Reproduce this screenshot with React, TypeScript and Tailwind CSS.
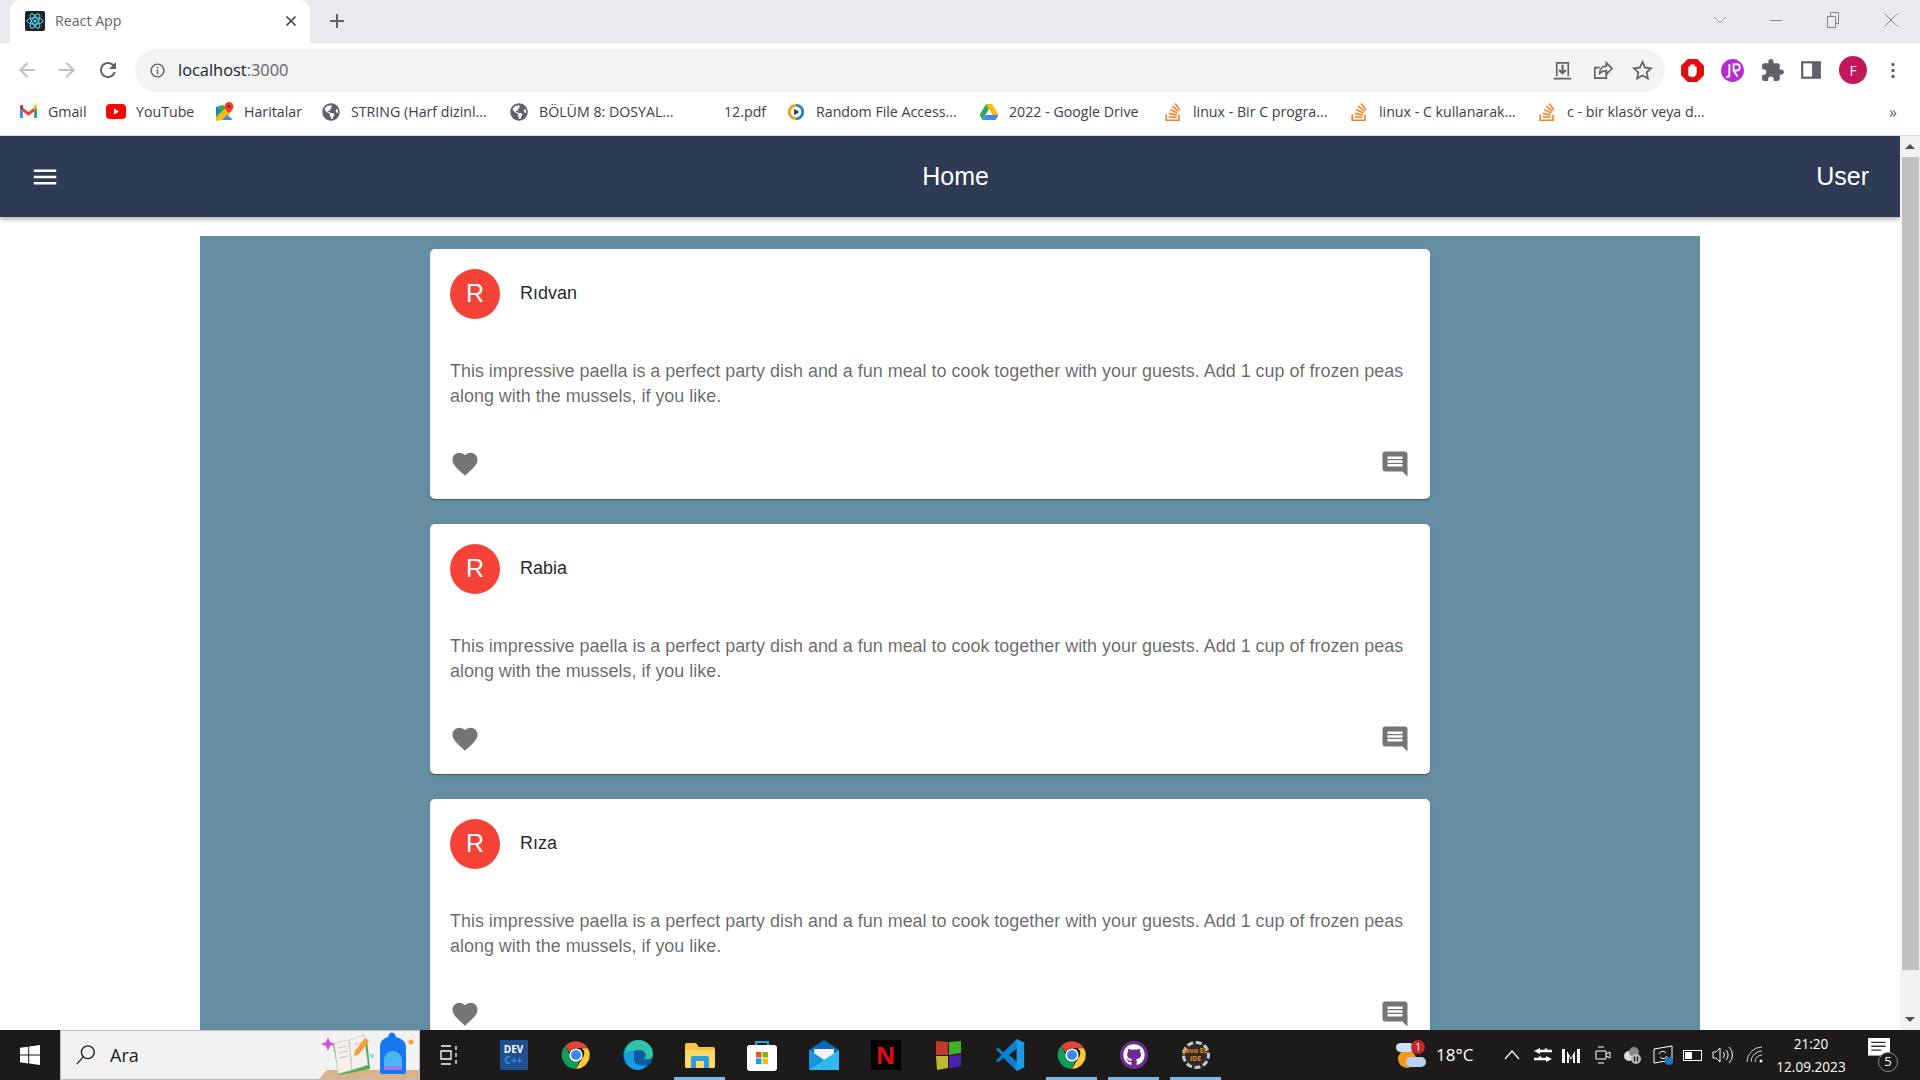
import React from 'react';
import { FaGithub, FaGlobeAmericas } from 'react-icons/fa';
import { SiStackoverflow } from 'react-icons/si';

const MuiIcon: React.FC<{ d: string; className?: string }> = ({ d, className }) => (
  <svg viewBox="0 0 24 24" className={className} fill="currentColor">
    <path d={d} />
  </svg>
);

const HEART = 'M12 21.35l-1.45-1.32C5.4 15.36 2 12.28 2 8.5 2 5.42 4.42 3 7.5 3c1.74 0 3.41.81 4.5 2.09C13.09 3.81 14.76 3 16.5 3 19.58 3 22 5.42 22 8.5c0 3.78-3.4 6.86-8.55 11.54L12 21.35z';
const COMMENT = 'M21.99 4c0-1.1-.89-2-1.99-2H4c-1.1 0-2 .9-2 2v12c0 1.1.9 2 2 2h14l4 4-.01-18zM18 14H6v-2h12v2zm0-3H6V9h12v2zm0-3H6V6h12v2z';
const MENU = 'M3 18h18v-2H3v2zm0-5h18v-2H3v2zm0-7v2h18V6H3z';
const BACK = 'M20 11H7.83l5.59-5.59L12 4l-8 8 8 8 1.41-1.41L7.83 13H20v-2z';
const FORWARD = 'M4 11h12.17l-5.59-5.59L12 4l8 8-8 8-1.41-1.41L16.17 13H4v-2z';
const RELOAD = 'M17.65 6.35C16.2 4.9 14.21 4 12 4c-4.42 0-7.99 3.58-7.99 8s3.57 8 7.99 8c3.73 0 6.84-2.55 7.73-6h-2.08c-.82 2.33-3.04 4-5.65 4-3.31 0-6-2.69-6-6s2.69-6 6-6c1.66 0 3.14.69 4.22 1.78L13 11h7V4l-2.35 2.35z';
const PUZZLE = 'M20.5 11H19V7c0-1.1-.9-2-2-2h-4V3.5C13 2.12 11.88 1 10.5 1S8 2.12 8 3.5V5H4c-1.1 0-1.99.9-1.99 2v3.8H3.5c1.49 0 2.7 1.21 2.7 2.7s-1.21 2.7-2.7 2.7H2V20c0 1.1.9 2 2 2h3.8v-1.5c0-1.49 1.21-2.7 2.7-2.7 1.49 0 2.7 1.21 2.7 2.7V22H17c1.1 0 2-.9 2-2v-4h1.5c1.38 0 2.5-1.12 2.5-2.5S21.88 11 20.5 11z';

const ChromeLogo: React.FC<{ className?: string }> = ({ className }) => (
  <svg viewBox="0 0 48 48" className={className}>
    <path d="M24 2a22 22 0 0 1 19.05 11H24a11 11 0 0 0-10.2 6.9L6.6 9.6A22 22 0 0 1 24 2z" fill="#db4437" />
    <path d="M43.05 13A22 22 0 0 1 24 46l9.6-16.5A11 11 0 0 0 33.5 13z" fill="#fcc934" />
    <path d="M24 46A22 22 0 0 1 6.6 9.6l9.9 17.1A11 11 0 0 0 29 33.7L24 46z" fill="#0f9d58" />
    <circle cx="24" cy="24" r="10.5" fill="#fff" />
    <circle cx="24" cy="24" r="8" fill="#4285f4" />
  </svg>
);

const Favicon = () => (
  <svg viewBox="0 0 20 20" className="h-5 w-5">
    <rect width="20" height="20" rx="2" fill="#20232a" />
    <g fill="none" stroke="#61dafb" strokeWidth="1">
      <ellipse cx="10" cy="10" rx="8" ry="3.2" />
      <ellipse cx="10" cy="10" rx="8" ry="3.2" transform="rotate(60 10 10)" />
      <ellipse cx="10" cy="10" rx="8" ry="3.2" transform="rotate(120 10 10)" />
    </g>
    <circle cx="10" cy="10" r="1.6" fill="#61dafb" />
  </svg>
);

const Gmail = () => (
  <svg viewBox="0 0 20 16" className="h-[15px] w-[19px]">
    <path d="M1 15V3l3 2v10H2a1 1 0 0 1-1-1z" fill="#4285f4" />
    <path d="M16 15V5l3-2v11a1 1 0 0 1-1 1z" fill="#34a853" />
    <path d="M4 8V4l6 4.5L16 4v4l-6 4.5z" fill="#ea4335" />
    <path d="M1 4.5V3c0-1.6 1.8-2.5 3-1.6V6z" fill="#c5221f" />
    <path d="M16 6V1.4c1.2-.9 3 0 3 1.6v1.5z" fill="#fbbc04" />
  </svg>
);

const YouTube = () => (
  <svg viewBox="0 0 20 15" className="h-[15px] w-5">
    <rect width="20" height="15" rx="4" fill="#f00" />
    <path d="M8 4.5v6l5-3z" fill="#fff" />
  </svg>
);

const Maps = () => (
  <svg viewBox="0 0 20 20" className="h-5 w-5">
    <path d="M2 5l7-2 3 3-10 10z" fill="#34a853" />
    <path d="M2 16L12 6l4 7-8 5-6 1z" fill="#fbbc04" />
    <path d="M8 18l5-5 5 4v1z" fill="#4285f4" />
    <path d="M2 5l4 4-4 4z" fill="#1a73e8" />
    <path d="M15 0a4.5 4.5 0 0 1 4.5 4.5c0 3-4.5 7-4.5 7s-4.5-4-4.5-7A4.5 4.5 0 0 1 15 0z" fill="#ea4335" />
    <circle cx="15" cy="4.5" r="1.6" fill="#a50e0e" />
  </svg>
);

const Random = () => (
  <svg viewBox="0 0 20 20" className="h-[18px] w-[18px]">
    <circle cx="10" cy="10" r="9" fill="#f39c12" />
    <path d="M10 1a9 9 0 0 1 0 18z" fill="#1e88c7" />
    <circle cx="10" cy="10" r="6" fill="#fff" />
    <path d="M8 6.5v7l5.5-3.5z" fill="#333" />
  </svg>
);

const Drive = () => (
  <svg viewBox="0 0 20 18" className="h-[18px] w-5">
    <path d="M7 1h6l6.5 11h-6z" fill="#fbbc04" />
    <path d="M7 1l3 5-6.5 11L.5 12z" fill="#34a853" />
    <path d="M6.5 12h13l-3 5h-13z" fill="#4285f4" />
  </svg>
);

const SO = () => <SiStackoverflow className="h-[18px] w-[18px] text-[#f48024]" />;
const Globe = () => <FaGlobeAmericas className="h-[18px] w-[18px] text-[#5f6368]" />;

const bookmarks = [
  { label: 'Gmail', icon: <Gmail />, cls: 'w-[88px]' },
  { label: 'YouTube', icon: <YouTube />, cls: 'w-[108px]' },
  { label: 'Haritalar', icon: <Maps />, cls: 'w-[107px]' },
  { label: 'STRING (Harf dizinl...', icon: <Globe />, cls: 'w-[188px]' },
  { label: 'BÖLÜM 8: DOSYAL...', icon: <Globe />, cls: 'w-[185px]' },
  { label: '12.pdf', icon: <span className="h-4 w-4" />, cls: 'w-[92px]' },
  { label: 'Random File Access...', icon: <Random />, cls: 'w-[193px]' },
  { label: '2022 - Google Drive', icon: <Drive />, cls: 'w-[184px]' },
  { label: 'linux - Bir C progra...', icon: <SO />, cls: 'w-[186px]' },
  { label: 'linux - C kullanarak...', icon: <SO />, cls: 'w-[188px]' },
  { label: 'c - bir klasör veya d...', icon: <SO />, cls: 'w-[200px]' },
];

const BrowserChrome = () => (
  <div className="font-['Open_Sans',sans-serif] text-[#3c4043]">
    {/* tab strip */}
    <div className="flex h-[43px] items-end bg-[#e8eaed] pl-[10px]">
      <div className="flex h-[43px] w-[300px] items-center rounded-t-[10px] bg-white pb-[2px] pl-[15px] pr-[13px]">
        <Favicon />
        <span className="ml-[10px] flex-1 text-[14.2px] text-[#5f6368]">React App</span>
        <svg viewBox="0 0 12 12" className="h-3 w-3" stroke="#3c4043" strokeWidth="1.6">
          <path d="M1.5 1.5l9 9M10.5 1.5l-9 9" />
        </svg>
      </div>
      <svg viewBox="0 0 16 16" className="mb-[14px] ml-[19px] h-4 w-4" stroke="#5f6368" strokeWidth="2">
        <path d="M8 1v14M1 8h14" />
      </svg>
      <div className="mb-[15px] ml-auto flex items-center text-[#9aa0a6]">
        <svg viewBox="0 0 14 8" className="mr-[43px] h-2 w-[14px]" fill="none" stroke="#9aa0a6">
          <path d="M1 1l6 6 6-6" />
        </svg>
        <span className="mr-[44px] h-px w-[12px] bg-[#80868b]" />
        <svg viewBox="0 0 14 16" className="mr-[44px] h-4 w-[14px]" fill="none" stroke="#80868b">
          <path d="M1.5 4.5h8v11h-8zM4.5 4.5v-4h8v11h-3" />
        </svg>
        <svg viewBox="0 0 14 14" className="mr-[22px] h-[14px] w-[14px]" fill="none" stroke="#80868b">
          <path d="M.5.5l13 13M13.5.5l-13 13" />
        </svg>
      </div>
    </div>

    {/* address bar */}
    <div className="flex h-[49px] items-center bg-white pl-[15px] pt-[5px]">
      <MuiIcon d={BACK} className="h-6 w-6 text-[#bdc1c6]" />
      <MuiIcon d={FORWARD} className="ml-4 h-6 w-6 text-[#bdc1c6]" />
      <MuiIcon d={RELOAD} className="ml-[17px] h-6 w-6 text-[#5f6368]" />
      <div className="ml-[15px] flex h-[43px] w-[1530px] items-center rounded-full bg-[#f1f3f4] pl-[15px] pr-[11px]">
        <svg viewBox="0 0 16 16" className="h-[15px] w-[15px]" fill="none" stroke="#5f6368" strokeWidth="1.5">
          <circle cx="8" cy="8" r="6.8" />
          <path d="M8 7v5M8 4v1.6" />
        </svg>
        <span className="ml-[13px] flex-1 text-[16.4px] text-[#202124]">
          localhost<span className="text-[#5f6368]">:3000</span>
        </span>
        <div className="flex items-center gap-[17px] text-[#5f6368]">
          <svg viewBox="0 0 24 24" className="h-[23px] w-[23px]" fill="none" stroke="#5f6368" strokeWidth="1.7">
            <path d="M6 18V4h12v14M3 20.5h18" />
            <path d="M12 6v9M8.5 11.5L12 15l3.5-3.5" strokeWidth="2.2" />
          </svg>
          <svg viewBox="0 0 24 24" className="h-[23px] w-[23px]" fill="none" stroke="#5f6368" strokeWidth="1.7">
            <path d="M16 12v8H4V9h5" />
            <path d="M9 15c0-5 3-7.5 7-7.5V4l6 6-6 6v-4c-3 0-5 1-7 3z" />
          </svg>
          <svg viewBox="0 0 24 24" className="h-[23px] w-[23px]" fill="none" stroke="#5f6368" strokeWidth="1.8">
            <path d="M12 3l2.7 6 6.3.7-4.7 4.3 1.3 6.4L12 17.2l-5.6 3.2 1.3-6.4L3 9.7 9.3 9z" />
          </svg>
        </div>
      </div>
      <div className="ml-[15px] flex items-center">
        <svg viewBox="0 0 24 24" className="h-[25px] w-[25px]">
          <path d="M7.5 1h9L23 7.5v9L16.5 23h-9L1 16.5v-9z" fill="#e30b0b" />
          <path d="M8 17V9a1 1 0 0 1 2 0V7a1 1 0 0 1 2 0v0a1 1 0 0 1 2 0v2a1 1 0 0 1 2 0v6l-2 3h-4z" fill="#fff" />
        </svg>
        <svg viewBox="0 0 24 24" className="ml-[15px] h-[25px] w-[25px]">
          <circle cx="12" cy="12" r="11" fill="#b52ad6" />
          <path d="M9 6v12M9 18h-3M13 6h3a3 3 0 0 1 0 6h-3zm0 6l4 6" fill="none" stroke="#fff" strokeWidth="1.8" />
        </svg>
        <MuiIcon d={PUZZLE} className="ml-[15px] h-[25px] w-[25px] text-[#5f6368]" />
        <svg viewBox="0 0 20 20" className="ml-[15px] h-[22px] w-[22px]">
          <path d="M1 2h18v16H1z" fill="#5f6368" />
          <path d="M3 4h8v12H3z" fill="#fff" />
        </svg>
        <div className="ml-[17px] flex h-7 w-7 items-center justify-center rounded-full bg-[#c2185b] text-[14px] text-white">
          F
        </div>
        <svg viewBox="0 0 4 20" className="ml-[24px] h-[17px] w-1" fill="#5f6368">
          <circle cx="2" cy="3" r="2" />
          <circle cx="2" cy="10" r="2" />
          <circle cx="2" cy="17" r="2" />
        </svg>
      </div>
    </div>

    {/* bookmarks */}
    <div className="flex h-[44px] items-center border-b border-[#dadce0] bg-white pb-[3px] pl-[18px] text-[14.2px] text-[#3c4043]">
      {bookmarks.map((b, i) => (
        <div key={i} className={`flex items-center gap-[10px] ${b.cls}`}>
          <span className="flex w-5 justify-center">{b.icon}</span>
          <span className="whitespace-nowrap">{b.label}</span>
        </div>
      ))}
      <span className="ml-auto mr-[23px] text-[16px] text-[#5f6368]">»</span>
    </div>
  </div>
);

const posts = ['Rıdvan', 'Rabia', 'Rıza'];

const PostCard: React.FC<{ name: string }> = ({ name }) => (
  <div className="w-[1000px] shrink-0 rounded-[5px] bg-white shadow-[0_2px_1px_-1px_rgba(0,0,0,0.2),0_1px_1px_0_rgba(0,0,0,0.14),0_1px_3px_0_rgba(0,0,0,0.12)]">
    <div className="flex items-center p-5">
      <div className="mr-5 flex h-[50px] w-[50px] items-center justify-center rounded-full bg-[#f44336] text-[25px] text-white">
        R
      </div>
      <span className="mb-[1px] text-[18px] leading-[25px] text-[rgba(0,0,0,0.87)]">{name}</span>
    </div>
    <p className="p-5 text-[17.95px] leading-[25px] text-[rgba(0,0,0,0.6)]">
      This impressive paella is a perfect party dish and a fun meal to cook together with your guests. Add 1 cup of
      frozen peas along with the mussels, if you like.
    </p>
    <div className="flex items-center justify-between p-[10px]">
      <div className="p-[10px]">
        <MuiIcon d={HEART} className="h-[30px] w-[30px] text-[#757575]" />
      </div>
      <div className="p-[10px]">
        <MuiIcon d={COMMENT} className="h-[30px] w-[30px] text-[#757575]" />
      </div>
    </div>
  </div>
);

const Scrollbar = () => (
  <div className="flex w-5 shrink-0 flex-col items-center bg-[#f1f1f1]">
    <div className="flex h-[21px] items-center justify-center">
      <span className="h-0 w-0 border-x-[5px] border-b-[5px] border-x-transparent border-b-[#505050]" />
    </div>
    <div className="h-[813px] w-[17px] bg-[#c1c1c1]" />
    <div className="mt-auto flex h-[21px] items-center justify-center">
      <span className="h-0 w-0 border-x-[5px] border-t-[5px] border-x-transparent border-t-[#505050]" />
    </div>
  </div>
);

const Underline = () => <span className="absolute bottom-0 left-[-6px] right-[-6px] h-[3px] bg-[#76b9ed]" />;

const TaskIcon: React.FC<{ active?: boolean; children: React.ReactNode }> = ({ active, children }) => (
  <div className="relative flex h-[50px] w-[39px] items-center justify-center">
    {children}
    {active && <Underline />}
  </div>
);

const Taskbar = () => (
  <div className="flex h-[50px] shrink-0 items-center bg-[#1c1b1a] font-['Open_Sans',sans-serif] text-white">
    <div className="flex h-[50px] w-[60px] items-center justify-center">
      <svg viewBox="0 0 20 20" className="h-5 w-5" fill="#fff">
        <path d="M0 2.8l8.2-1.1v7.9H0zM9.2 1.5L20 0v9.6H9.2zM0 10.5h8.2v7.9L0 17.2zM9.2 10.5H20V20L9.2 18.5z" />
      </svg>
    </div>
    <div className="relative flex h-[50px] w-[360px] items-center overflow-hidden border border-[#bdbdbd] bg-[#f2f2f2] pl-[14px] text-[#1c1b1a]">
      <svg viewBox="0 0 24 24" className="h-[22px] w-[22px]" fill="none" stroke="#222" strokeWidth="1.5">
        <circle cx="14" cy="9" r="7" />
        <path d="M9 14l-7 8" />
      </svg>
      <span className="ml-[13px] text-[18px]">Ara</span>
      <svg viewBox="0 0 100 50" className="absolute bottom-0 right-0 h-[50px] w-[100px]">
        <path d="M0 50l8-9h92v9z" fill="#d9b48a" />
        <path d="M14 16l34-6 3 30-31 6z" fill="#4caf50" />
        <path d="M15 14l15-3 3 30-14 4zM30 11l15-5 4 30-16 5z" fill="#f5f0ea" stroke="#b5b0c0" strokeWidth="0.5" />
        <path d="M19 19l9-2M20 24l9-2M20 29l9-2M35 16l8-3M36 21l8-3" stroke="#b9b4c4" strokeWidth="0.8" />
        <path d="M36 22l10-13 4 3-10 13-5 2z" fill="#f59e3b" />
        <path d="M9 8l2 5 5 2-5 2-2 5-2-5-5-2 5-2z" fill="#d14fe0" />
        <circle cx="53" cy="27" r="2" fill="#7fd6e8" />
        <path d="M61 43V18c0-7 5-9 8-10 1-6 7-6 8 0 3 1 10 3 10 10v25a2 2 0 0 1-2 2H63a2 2 0 0 1-2-2z" fill="#1677ee" />
        <path d="M65 41V31a9 9 0 0 1 18 0v10z" fill="#4ab4f5" />
        <path d="M65 37h18v4H65z" fill="#9a7cf0" />
        <circle cx="92" cy="13" r="2.5" fill="#f5a623" />
      </svg>
    </div>
    <div className="ml-[20px] flex h-[50px] w-[20px] items-center justify-center">
      <svg viewBox="0 0 20 20" className="h-5 w-5" fill="none" stroke="#fff" strokeWidth="1.3">
        <path d="M1 1h10M1 19h10M1 6h10v8H1zM16 1v4M16 8v4M16 15v4" />
      </svg>
    </div>
    <div className="ml-[34px] flex items-center gap-[23px]">
      <TaskIcon>
        <div className="flex h-[30px] w-7 flex-col items-center justify-center bg-[#1d4f91] text-[10px] font-bold leading-[11px]">
          <span>DEV</span>
          <span className="text-[#3d8be0]">C++</span>
        </div>
      </TaskIcon>
      <TaskIcon>
        <ChromeLogo className="h-[30px] w-[30px]" />
      </TaskIcon>
      <TaskIcon>
        <svg viewBox="0 0 30 30" className="h-[30px] w-[30px]">
          <circle cx="15" cy="15" r="15" fill="#0c59a4" />
          <path d="M1 14C2 6 8 0 15 0c8 0 15 6 15 14 0 5-5 6-9 5 3-3 2-9-5-9-7 0-10 4-15 4z" fill="#2fc4a8" />
          <path d="M11 19c0 5 6 8 13 6-3 3-6 5-9 5C7 30 1 23 1 15c2-4 6-5 10-4z" fill="#1b9de2" />
        </svg>
      </TaskIcon>
      <TaskIcon active>
        <svg viewBox="0 0 30 26" className="h-[26px] w-[30px]">
          <path d="M0 3a2 2 0 0 1 2-2h9l3 4h14a2 2 0 0 1 2 2v17a2 2 0 0 1-2 2H2a2 2 0 0 1-2-2z" fill="#f5c242" />
          <path d="M0 8h30v16a2 2 0 0 1-2 2H2a2 2 0 0 1-2-2z" fill="#ffd968" />
          <path d="M6 26V16a2 2 0 0 1 2-2h14a2 2 0 0 1 2 2v10h-5v-7h-8v7z" fill="#2a9fe0" />
        </svg>
      </TaskIcon>
      <TaskIcon>
        <svg viewBox="0 0 30 32" className="h-[32px] w-[30px]">
          <path d="M9 8V3h12v5" fill="none" stroke="#1ba1e2" strokeWidth="2" />
          <rect y="6" width="30" height="26" rx="3" fill="#fff" />
          <rect x="9" y="13" width="5.5" height="5.5" fill="#f25022" />
          <rect x="15.5" y="13" width="5.5" height="5.5" fill="#7fba00" />
          <rect x="9" y="19.5" width="5.5" height="5.5" fill="#00a4ef" />
          <rect x="15.5" y="19.5" width="5.5" height="5.5" fill="#ffb900" />
        </svg>
      </TaskIcon>
      <TaskIcon>
        <svg viewBox="0 0 30 30" className="h-[30px] w-[30px]">
          <path d="M0 10L15 0l15 10v20H0z" fill="#0a6cbf" />
          <path d="M5 9h20v6l-10 6L5 15z" fill="#f2f2f2" />
          <path d="M0 10l15 10 15-10v20H0z" fill="#31b7f2" />
          <path d="M0 30V10l15 10z" fill="#1695dc" />
        </svg>
      </TaskIcon>
      <TaskIcon>
        <div className="flex h-[30px] w-[30px] items-center justify-center bg-black text-[24px] font-bold leading-none text-[#e50914]">
          N
        </div>
      </TaskIcon>
      <TaskIcon>
        <svg viewBox="0 0 26 30" className="h-[30px] w-[26px]">
          <path d="M1 1l12 1v13H1z" fill="#c0392b" />
          <path d="M14 2l12-1v12l-12 2z" fill="#43b02a" />
          <path d="M1 16h12v12L2 30z" fill="#bdb82e" />
          <path d="M14 16l12-2v12l-12 3z" fill="#4b1fa8" />
        </svg>
      </TaskIcon>
      <TaskIcon>
        <svg viewBox="0 0 30 34" className="h-[32px] w-[30px]">
          <path d="M22 0l8 4v26l-8 4L8 20l-6 5-2-2 6-6-6-6 2-2 6 5z" fill="#0d7fd1" />
          <path d="M22 0l8 4v26l-8 4z" fill="#1a9ce8" />
          <path d="M22 10l-8 7 8 7z" fill="#1c1b1a" />
        </svg>
      </TaskIcon>
      <TaskIcon active>
        <ChromeLogo className="h-[30px] w-[30px]" />
      </TaskIcon>
      <TaskIcon active>
        <div className="flex h-7 w-7 items-center justify-center rounded-full bg-[#6e2c91]">
          <FaGithub className="h-[22px] w-[22px] text-white" />
        </div>
      </TaskIcon>
      <TaskIcon active>
        <div className="flex h-7 w-7 flex-col items-center justify-center rounded-full border-[3px] border-dashed border-[#c8c8c8] bg-[#2d2d2d] text-[7px] font-bold leading-[8px] text-[#e58a1f]">
          <span className="whitespace-nowrap">Java EE</span>
          <span>IDE</span>
        </div>
      </TaskIcon>
    </div>

    {/* tray */}
    <div className="ml-auto flex items-center">
      <div className="relative h-[30px] w-[30px]">
        <span className="absolute bottom-[2px] left-[2px] h-[18px] w-[18px] rounded-full bg-[#f39a1e]" />
        <span className="absolute left-0 top-[3px] h-[9px] w-[18px] rounded-full bg-[#cfe0f5]" />
        <span className="absolute bottom-[3px] right-0 h-[10px] w-[20px] rounded-full bg-[#b9d2ee]" />
        <span className="absolute right-[1px] top-0 flex h-[14px] w-[14px] items-center justify-center rounded-full bg-[#c62828] text-[10px]">
          1
        </span>
      </div>
      <span className="ml-[10px] w-[50px] text-[17px]">18°C</span>
      <svg viewBox="0 0 16 10" className="ml-[18px] h-[10px] w-4" fill="none" stroke="#fff" strokeWidth="1.2">
        <path d="M1 9l7-8 7 8" />
      </svg>
      <svg viewBox="0 0 18 16" className="ml-[14px] h-4 w-[18px]" fill="#fff">
        <path d="M6 4h12M12 4V1.5M0 12h12M6 12V9.5" stroke="#fff" strokeWidth="2.5" />
        <path d="M0 4l6-3v6zM18 12l-6-3v6z" />
      </svg>
      <svg viewBox="0 0 18 16" className="ml-[10px] h-4 w-[18px]" fill="#fff">
        <path d="M0 2h3v14H0zM5 4l4 7 4-7v12h-2V9l-2 4-2-4v7H5zM15 2h3v14h-3z" />
      </svg>
      <svg viewBox="0 0 16 20" className="ml-[15px] h-5 w-4" fill="none" stroke="#fff">
        <path d="M1 6h10v8H1zM11 9l4-2v6l-4-2M3 2h6M3 18h6" />
      </svg>
      <svg viewBox="0 0 20 18" className="ml-[11px] h-[18px] w-5">
        <circle cx="7" cy="10" r="5" fill="#ddd" />
        <circle cx="12" cy="6" r="5" fill="#888" />
        <circle cx="14" cy="13" r="5" fill="#bbb" />
        <path d="M12.5 10.5v5M15.5 10.5v5" stroke="#222" strokeWidth="1.5" />
      </svg>
      <div className="relative ml-[11px] h-5 w-5">
        <svg viewBox="0 0 20 20" className="h-5 w-5" fill="none" stroke="#fff">
          <path d="M1 4l18-3v14l-18 3zM6 9a4 4 0 0 1 7-1M14 11a4 4 0 0 1-7 1" />
        </svg>
        <span className="absolute bottom-0 right-0 h-2 w-2 rounded-full bg-[#1976d2]" />
      </div>
      <div className="ml-[10px] flex h-[11px] w-[19px] items-center border border-white p-[1px]">
        <span className="h-full w-[7px] bg-white" />
      </div>
      <svg viewBox="0 0 22 18" className="ml-[10px] h-[18px] w-[22px]" fill="none" stroke="#fff">
        <path d="M1 6h3l4-4v14l-4-4H1zM11 6a4 4 0 0 1 0 6M14 4a7 7 0 0 1 0 10M17 1a11 11 0 0 1 0 16" />
      </svg>
      <svg viewBox="0 0 18 18" className="ml-[12px] h-[18px] w-[18px]" fill="none" stroke="#ccc">
        <path d="M1 16A15 15 0 0 1 16 1M5 16A11 11 0 0 1 16 5M9 16a7 7 0 0 1 7-7" />
        <circle cx="15" cy="15" r="1.5" fill="#fff" stroke="none" />
      </svg>
      <div className="ml-[4px] flex w-[86px] flex-col items-center text-[13.6px] leading-[23px]">
        <span>21:20</span>
        <span>12.09.2023</span>
      </div>
      <div className="relative ml-[14px] mr-[22px] h-[34px] w-[30px]">
        <svg viewBox="0 0 20 20" className="h-[22px] w-[22px]" fill="#fff">
          <path d="M0 0h20v16H0z" />
          <path d="M3 4h13M3 7.5h13M3 11h9" stroke="#333" strokeWidth="1.2" />
        </svg>
        <span className="absolute bottom-0 right-0 flex h-[20px] w-[20px] items-center justify-center rounded-full border border-[#888] bg-[#1c1b1a] text-[13px]">
          5
        </span>
      </div>
    </div>
  </div>
);

export default function App() {
  return (
    <div className="flex h-screen flex-col overflow-hidden bg-white font-['Liberation_Sans',Arial,sans-serif]">
      <BrowserChrome />
      <div className="flex min-h-0 flex-1">
        <div className="min-w-0 flex-1 overflow-hidden">
          <header className="relative z-10 flex h-[81px] items-center bg-[#2e3b55] pl-5 pr-[31px] text-white shadow-[0_2px_5px_rgba(0,0,0,0.35)]">
            <div className="mr-[25px] p-[10px]">
              <MuiIcon d={MENU} className="h-[30px] w-[30px]" />
            </div>
            <h1 className="flex-1 text-center text-[25px] font-normal">Home</h1>
            <span className="text-[25px]">User</span>
          </header>
          <main className="mx-auto mt-[19px] flex h-[900px] w-[1500px] flex-col items-start gap-[25px] bg-[#668ea3] pl-[230px] pt-[13px]">
            {posts.map((name) => (
              <PostCard key={name} name={name} />
            ))}
          </main>
        </div>
        <Scrollbar />
      </div>
      <Taskbar />
    </div>
  );
}
